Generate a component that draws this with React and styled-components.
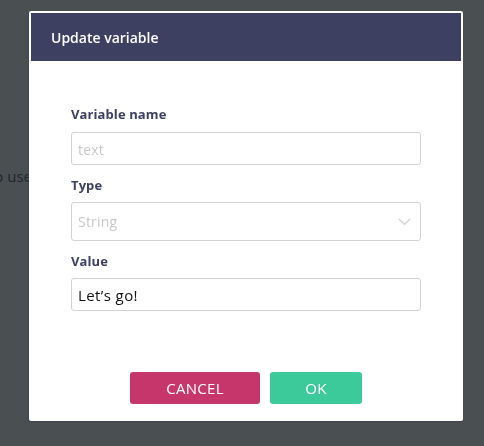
import React from 'react';
import styled, { createGlobalStyle } from 'styled-components';

const GlobalStyle = createGlobalStyle`
    html, body {
        margin: 0;
        padding: 0;
        height: 100%;
        background: #4a4f52;
        font-family: "Open Sans", "Liberation Sans", sans-serif;
    }
`;

const Page = styled.div`
    height: 446px;
    overflow: hidden;
    padding-top: 166px;
    box-sizing: border-box;
`;

const BackText = styled.p`
    margin: 0 0 0 -14px;
    font-size: 15px;
    color: #22262a;
    white-space: nowrap;
`;

const Modal = styled.div`
    position: fixed;
    top: 11px;
    left: 29px;
    width: 434px;
    height: 410px;
    box-sizing: border-box;
    background: #fff;
    border: 2px solid #fff;
    border-radius: 2px;
    box-shadow: -1px 1px 1px rgba(61, 64, 97, 0.6);
    display: flex;
    flex-direction: column;
`;

const Header = styled.div`
    height: 48px;
    flex-shrink: 0;
    background: #3d4061;
    color: #fff;
    display: flex;
    align-items: center;
    padding-left: 20px;
    font-size: 14px;
    font-weight: 600;
`;

const Body = styled.div`
    flex: 1;
    display: flex;
    flex-direction: column;
    padding: 45px 40px 15px 40px;
`;

const Field = styled.div`
    display: flex;
    flex-direction: column;
    margin-bottom: 12px;
`;

const Label = styled.label`
    font-size: 13px;
    line-height: 16px;
    font-weight: 700;
    color: #3d4061;
    letter-spacing: 0.1px;
    margin-bottom: ${(p) => p.$gap || 10}px;
`;

const Input = styled.input`
    height: 33px;
    box-sizing: border-box;
    border: 1px solid #d2d2d2;
    border-radius: 3px;
    padding: 0 6px;
    font-family: inherit;
    font-size: 15px;
    letter-spacing: 0.4px;
    color: #111;
    outline: none;
    &::placeholder {
        color: #c8c8c8;
        font-size: 14px;
        letter-spacing: 0.2px;
    }
`;

const Select = styled.div`
    height: 39px;
    box-sizing: border-box;
    border: 1px solid #d2d2d2;
    border-radius: 3px;
    padding: 0 9px 0 6px;
    display: flex;
    align-items: center;
    justify-content: space-between;
    font-size: 14px;
    letter-spacing: 0.2px;
    color: #c8c8c8;
`;

const Footer = styled.div`
    margin-top: auto;
    display: flex;
    justify-content: center;
    gap: 10px;
`;

const Button = styled.button`
    width: ${(p) => p.$width}px;
    height: 32px;
    border: none;
    border-radius: 3px;
    background: ${(p) => p.$color};
    color: #fff;
    font-family: inherit;
    font-size: 15px;
    letter-spacing: 0.3px;
    text-transform: uppercase;
    padding: 0;
`;

const Chevron = () => (
    <svg width="13" height="8" viewBox="0 0 13 8">
        <path d="M1 1 L6.5 6.5 L12 1" fill="none" stroke="#cfcfcf" strokeWidth="1.2" />
    </svg>
);

const App = () => {
    return (
        <Page>
            <GlobalStyle />
            <BackText>To use variables</BackText>
            <Modal>
                <Header>Update variable</Header>
                <Body>
                    <Field>
                        <Label>Variable name</Label>
                        <Input placeholder="text" readOnly />
                    </Field>
                    <Field>
                        <Label $gap={9}>Type</Label>
                        <Select>
                            String
                            <Chevron />
                        </Select>
                    </Field>
                    <Field>
                        <Label $gap={9}>Value</Label>
                        <Input defaultValue="Let’s go!" readOnly />
                    </Field>
                    <Footer>
                        <Button $width={130} $color="#c7366a">Cancel</Button>
                        <Button $width={92} $color="#3dca9b">OK</Button>
                    </Footer>
                </Body>
            </Modal>
        </Page>
    );
};

export default App;
